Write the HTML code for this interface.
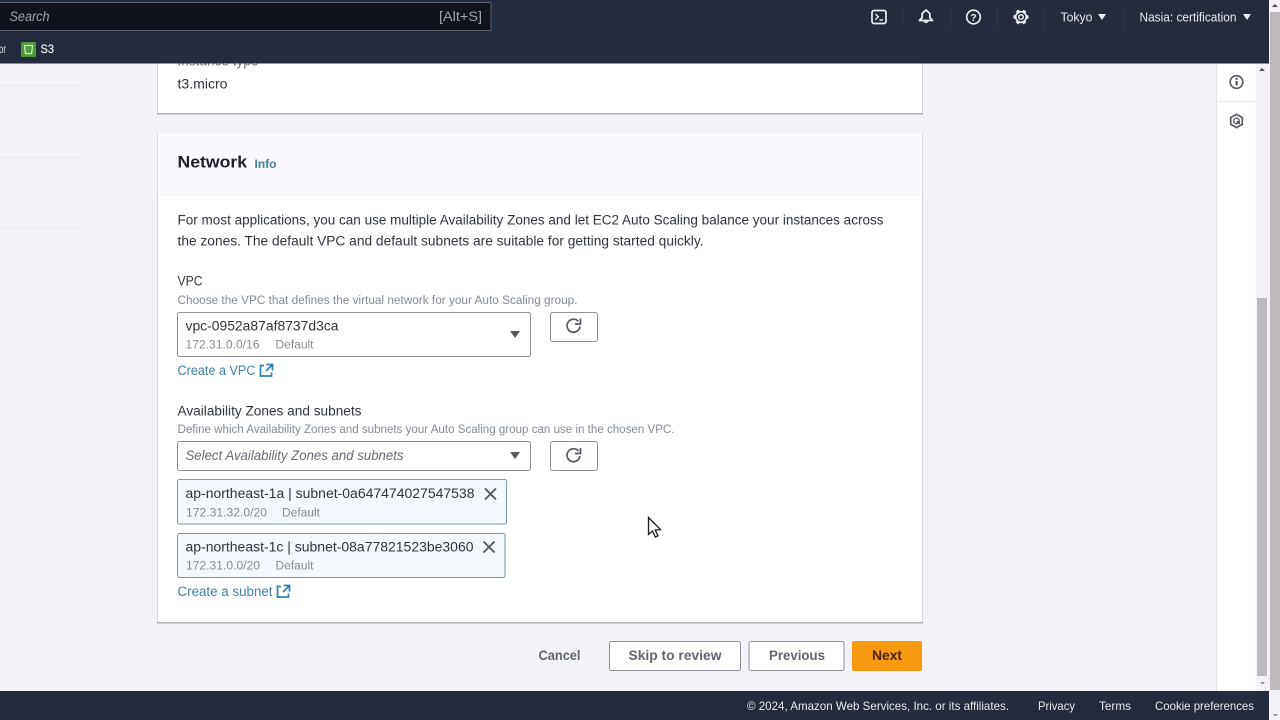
<!DOCTYPE html>
<html lang="en"><head><meta charset="utf-8"><title>Network</title>
<style>
html,body{margin:0;padding:0;width:1280px;height:720px;overflow:hidden;background:#f3f2f7}
svg{display:block;position:absolute;left:0;top:0;filter:blur(.35px)}
text{font-family:"Liberation Sans",sans-serif;font-size:13.5px;fill:#30343d}
.d{font-size:11.5px;fill:#858b94}
.l{fill:#44809f}
.w{fill:#e6e8ec}
</style></head><body>
<svg width="1280" height="720" viewBox="0 0 1280 720" xmlns="http://www.w3.org/2000/svg">
<rect width="1280" height="720" fill="#f3f2f7"/>
<!-- scrollbars -->
<rect x="1269" y="0" width="11" height="720" fill="#f4f2f6"/>
<rect x="1270" y="12" width="10" height="678" fill="#bdb9bc"/>
<path d="M1272 7l3-3 3 3z" fill="#4a4a4e"/>
<rect x="1256" y="64" width="13" height="627" fill="#f4f1f8"/>
<rect x="1257" y="298" width="10" height="378" fill="#bdbbc0"/>
<path d="M1259 71l3-3 3 3z" fill="#4a4a4e"/>
<path d="M1260 682l2.500 2.500 2.500-2.500z" fill="#8b8b90"/>
<path d="M1273 714l2.500 2.500 2.500-2.500z" fill="#8b8b90"/>
<!-- right tools -->
<rect x="1217" y="64" width="39" height="627" fill="#fff"/>
<rect x="1216" y="64" width="1" height="627" fill="#e4e2e7"/>
<rect x="1217" y="101" width="39" height="1" fill="#ebeaed"/>
<circle cx="1236.500" cy="82" r="6.300" fill="none" stroke="#565a61" stroke-width="1.700"/>
<rect x="1235.500" y="81" width="2.200" height="4.500" fill="#565a61"/><rect x="1235.500" y="77.800" width="2.200" height="2" fill="#565a61"/>
<path d="M1236.500 114.300l5.800 3.300v6.700l-5.800 3.300-5.800-3.300v-6.700z" fill="none" stroke="#565a61" stroke-width="1.700"/>
<circle cx="1236.500" cy="121" r="2.800" fill="none" stroke="#565a61" stroke-width="1.300"/>
<path d="M1236.500 121h3.500v3h-3z" fill="#565a61"/>
<!-- left nav remains -->
<rect x="0" y="85" width="82" height="1" fill="#e9e8ec"/>
<rect x="0" y="157" width="82" height="1" fill="#e9e8ec"/>
<rect x="0" y="228" width="82" height="1" fill="#e9e8ec"/>
<!-- instance card -->
<rect x="158" y="60" width="764" height="53" fill="#fff"/>
<rect x="157" y="60" width="1" height="54" fill="#d2d1d5"/>
<rect x="922" y="60" width="1" height="54" fill="#d2d1d5"/>
<rect x="157" y="113" width="766" height="1.500" fill="#b2b2b6"/>
<text x="177.500" y="65.500" textLength="81" lengthAdjust="spacingAndGlyphs" style="fill:#6c727a">Instance type</text>
<text x="177.500" y="88.500" textLength="50" lengthAdjust="spacingAndGlyphs">t3.micro</text>
<!-- network card -->
<rect x="158" y="134" width="764" height="488" fill="#fff"/>
<rect x="158" y="134" width="764" height="60" fill="#fbf9fd"/>
<rect x="158" y="194" width="764" height="1" fill="#f5f4f7"/>
<rect x="157" y="134" width="1" height="489" fill="#d8d7db"/>
<rect x="922" y="134" width="1" height="489" fill="#d8d7db"/>
<rect x="157" y="622" width="766" height="1.500" fill="#b2b2b6"/>
<text x="177.500" y="167.500" textLength="69.500" lengthAdjust="spacingAndGlyphs" style="font-size:17px;font-weight:700;fill:#1d1f2a">Network</text>
<text x="254.500" y="168" textLength="22" lengthAdjust="spacingAndGlyphs" class="l" style="font-size:11.5px;font-weight:700">Info</text>
<text x="177.500" y="224.500" textLength="706" lengthAdjust="spacingAndGlyphs">For most applications, you can use multiple Availability Zones and let EC2 Auto Scaling balance your instances across</text>
<text x="177.500" y="245.500" textLength="526" lengthAdjust="spacingAndGlyphs">the zones. The default VPC and default subnets are suitable for getting started quickly.</text>
<text x="177.500" y="285.500" textLength="25" lengthAdjust="spacingAndGlyphs">VPC</text>
<text x="177.500" y="304" textLength="400" lengthAdjust="spacingAndGlyphs" class="d">Choose the VPC that defines the virtual network for your Auto Scaling group.</text>
<rect x="177.500" y="312.500" width="353" height="44" rx="2" fill="#fff" stroke="#8e9198"/>
<text x="185.500" y="330.500" textLength="153" lengthAdjust="spacingAndGlyphs">vpc-0952a87af8737d3ca</text>
<text x="185.500" y="348.300" textLength="74" lengthAdjust="spacingAndGlyphs" class="d">172.31.0.0/16</text>
<text x="275.500" y="348.300" textLength="38" lengthAdjust="spacingAndGlyphs" class="d">Default</text>
<path d="M510 331h10l-5 7z" fill="#565a61"/>
<rect x="550.500" y="312.500" width="47" height="29" rx="2" fill="#fff" stroke="#8e9198"/>
<path d="M578.500 321.500a6.500 6.500 0 1 0 1.500 5" fill="none" stroke="#565a61" stroke-width="1.700"/><path d="M580.500 318.500v5.500h-5.500" fill="none" stroke="#565a61" stroke-width="1.700"/>
<text x="177.500" y="375" textLength="78" lengthAdjust="spacingAndGlyphs" class="l">Create a VPC</text>
<path d="M264 365.500h-3.500v10.500h11v-3.500M266.500 364.500h6v6M272 365l-6 6" fill="none" stroke="#2f84b3" stroke-width="1.800"/>
<text x="177.500" y="415.500" textLength="184" lengthAdjust="spacingAndGlyphs">Availability Zones and subnets</text>
<text x="177.500" y="433" textLength="497" lengthAdjust="spacingAndGlyphs" class="d">Define which Availability Zones and subnets your Auto Scaling group can use in the chosen VPC.</text>
<rect x="177.500" y="441.500" width="353" height="29" rx="2" fill="#fff" stroke="#8e9198"/>
<text x="185.500" y="460" textLength="218" lengthAdjust="spacingAndGlyphs" style="font-style:italic;fill:#666c74">Select Availability Zones and subnets</text>
<path d="M510 452h10l-5 7z" fill="#565a61"/>
<rect x="550.500" y="441.500" width="47" height="29" rx="2" fill="#fff" stroke="#8e9198"/>
<path d="M578.500 451a6.500 6.500 0 1 0 1.500 5" fill="none" stroke="#565a61" stroke-width="1.700"/><path d="M580.500 448v5.500h-5.500" fill="none" stroke="#565a61" stroke-width="1.700"/>
<!-- tokens -->
<rect x="177.500" y="479.500" width="329" height="44.500" rx="2" fill="#f2f8fc" stroke="#7499ae"/>
<text x="185.500" y="498" textLength="289" lengthAdjust="spacingAndGlyphs">ap-northeast-1a | subnet-0a647474027547538</text>
<text x="186" y="516.300" textLength="81" lengthAdjust="spacingAndGlyphs" class="d">172.31.32.0/20</text>
<text x="282" y="516.300" textLength="38" lengthAdjust="spacingAndGlyphs" class="d">Default</text>
<path d="M485 488.500l11 11M496 488.500l-11 11" stroke="#565a61" stroke-width="1.900" fill="none"/>
<rect x="177.500" y="533.500" width="327.500" height="44" rx="2" fill="#f2f8fc" stroke="#7499ae"/>
<text x="185.500" y="551.500" textLength="288" lengthAdjust="spacingAndGlyphs">ap-northeast-1c | subnet-08a77821523be3060</text>
<text x="186" y="569.300" textLength="74" lengthAdjust="spacingAndGlyphs" class="d">172.31.0.0/20</text>
<text x="275.500" y="569.300" textLength="38" lengthAdjust="spacingAndGlyphs" class="d">Default</text>
<path d="M483.500 541.500l11 11M494.500 541.500l-11 11" stroke="#565a61" stroke-width="1.900" fill="none"/>
<text x="177.500" y="596" textLength="95" lengthAdjust="spacingAndGlyphs" class="l">Create a subnet</text>
<path d="M281 586.500h-3.500v10.500h11v-3.500M283.500 585.500h6v6M289 586l-6 6" fill="none" stroke="#2f84b3" stroke-width="1.800"/>
<!-- cursor -->
<path d="M648.500 517.500v17l4-3.500 2.800 6 2.700-1.200-2.800-5.800 5.300-.4z" fill="#fff" stroke="#1c1c1f" stroke-width="1.300"/>
<!-- buttons -->
<text x="538.500" y="660" textLength="42" lengthAdjust="spacingAndGlyphs" style="font-weight:700;fill:#62676f">Cancel</text>
<rect x="609.500" y="641.500" width="131" height="29" rx="2" fill="#fff" stroke="#8d9096"/>
<text x="628.500" y="660" textLength="93" lengthAdjust="spacingAndGlyphs" style="font-weight:700;fill:#62676f">Skip to review</text>
<rect x="749" y="641.500" width="95" height="29" rx="2" fill="#fff" stroke="#8d9096"/>
<text x="769" y="660" textLength="56" lengthAdjust="spacingAndGlyphs" style="font-weight:700;fill:#62676f">Previous</text>
<rect x="852" y="641" width="70" height="30" rx="2" fill="#f79a0f"/>
<text x="872" y="660" textLength="30" lengthAdjust="spacingAndGlyphs" style="font-weight:700;fill:#4a2410">Next</text>
<!-- footer -->
<rect x="0" y="691" width="1269" height="29" fill="#232b3c"/>
<text x="747" y="710" textLength="262" lengthAdjust="spacingAndGlyphs" class="w" style="font-size:12px">© 2024, Amazon Web Services, Inc. or its affiliates.</text>
<text x="1038" y="710" textLength="37" lengthAdjust="spacingAndGlyphs" class="w" style="font-size:12px">Privacy</text>
<text x="1099" y="710" textLength="32" lengthAdjust="spacingAndGlyphs" class="w" style="font-size:12px">Terms</text>
<text x="1155" y="710" textLength="99" lengthAdjust="spacingAndGlyphs" class="w" style="font-size:12px">Cookie preferences</text>
<!-- header -->
<rect x="0" y="0" width="1269" height="63.500" fill="#232b3c"/>
<rect x="-2" y="2.500" width="493" height="28" rx="1" fill="#11131c" stroke="#5b6270"/>
<text x="9.500" y="21" textLength="40" lengthAdjust="spacingAndGlyphs" style="font-style:italic;fill:#9da3ac">Search</text>
<text x="439" y="21" textLength="43" lengthAdjust="spacingAndGlyphs" style="fill:#9da3ac">[Alt+S]</text>
<text x="-1" y="53" textLength="7" lengthAdjust="spacingAndGlyphs" class="w" style="font-size:11.500px">or</text>
<rect x="21" y="42" width="15" height="15" rx="1" fill="#4f9a38"/>
<path d="M24.500 45.500h8l-.9 8h-6.200z" fill="none" stroke="#d8efc8" stroke-width="1.200"/>
<text x="40.500" y="53" textLength="13.500" lengthAdjust="spacingAndGlyphs" class="w" style="font-size:11.500px;font-weight:400;stroke:#e6e8ec;stroke-width:.25">S3</text>
<!-- top icons -->
<rect x="872" y="10.500" width="14" height="13" rx="2" fill="none" stroke="#eceef1" stroke-width="1.700"/>
<path d="M875.500 14l2.800 2.800-2.800 2.800M879.500 20h3.500" fill="none" stroke="#eceef1" stroke-width="1.400"/>
<path d="M926 10l-3.800 3.500v4l-2.700 3h13l-2.700-3v-4z" fill="none" stroke="#eceef1" stroke-width="1.800" stroke-linejoin="round"/>
<path d="M923.500 21.500a2.800 2.800 0 0 0 5 0z" fill="#eceef1"/>
<circle cx="973.500" cy="17" r="6.800" fill="none" stroke="#eceef1" stroke-width="1.700"/>
<text x="970.300" y="21" style="font-size:10.500px;font-weight:700;fill:#eceef1">?</text>
<circle cx="1021" cy="17" r="5.300" fill="none" stroke="#eceef1" stroke-width="1.700"/>
<circle cx="1021" cy="17" r="6.700" fill="none" stroke="#eceef1" stroke-width="1.800" stroke-dasharray="3.400 3.617" transform="rotate(-15 1021 17)"/>
<circle cx="1021" cy="17" r="2.300" fill="none" stroke="#eceef1" stroke-width="1.500"/>
<g fill="#2e3746"><rect x="902" y="7" width="1" height="20"/><rect x="950" y="6" width="1" height="22"/><rect x="997" y="6" width="1" height="22"/><rect x="1044" y="6" width="1" height="22"/><rect x="1123" y="6" width="1" height="22"/></g>
<text x="1060.500" y="21.500" textLength="32" lengthAdjust="spacingAndGlyphs" class="w" style="font-size:12.500px">Tokyo</text>
<path d="M1098 14h8l-4 6z" fill="#eceef1"/>
<text x="1139.500" y="21.500" textLength="97" lengthAdjust="spacingAndGlyphs" class="w" style="font-size:12.500px">Nasia: certification</text>
<path d="M1243 14h8l-4 6z" fill="#eceef1"/>
</svg>
</body></html>
